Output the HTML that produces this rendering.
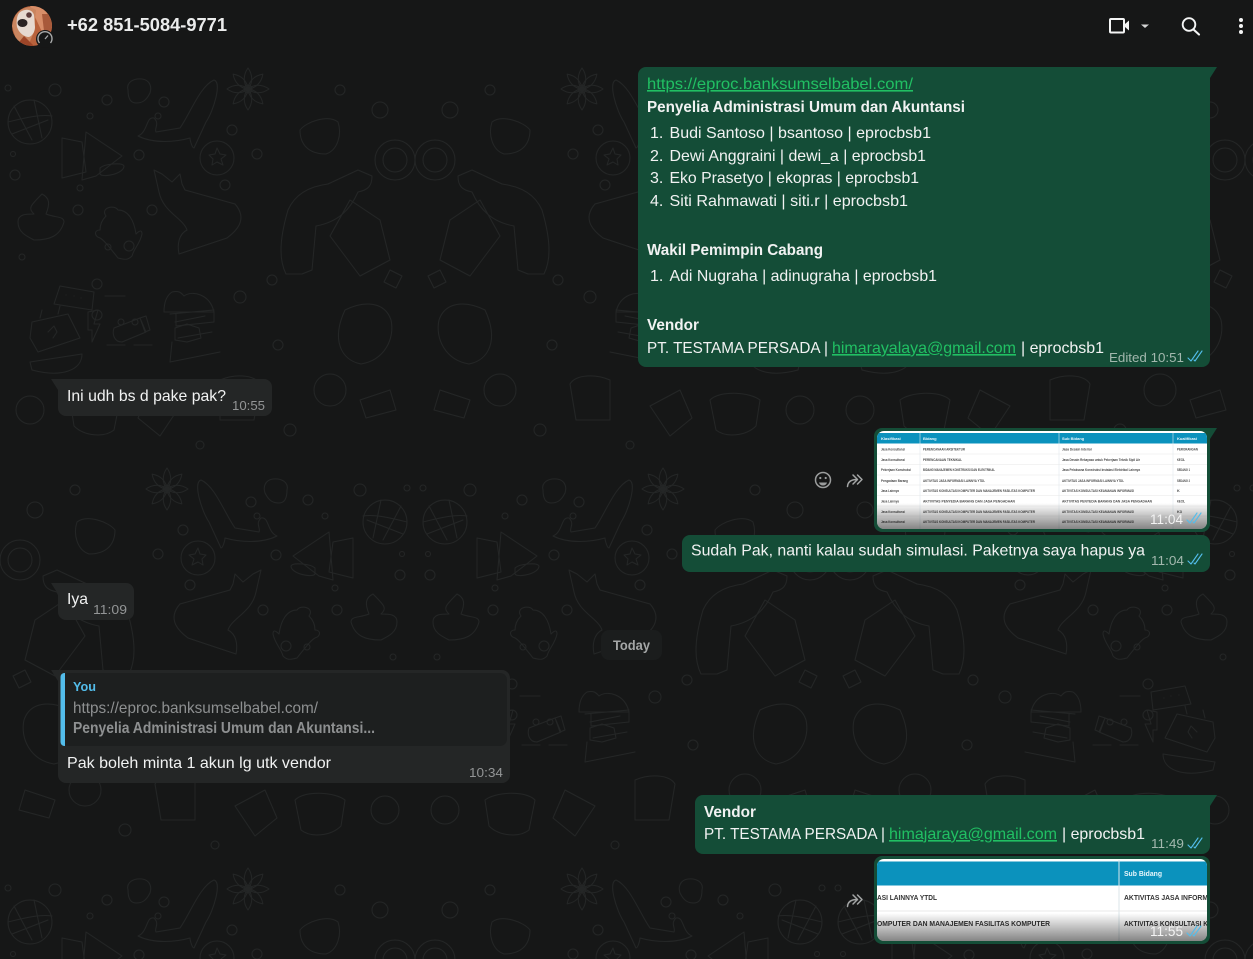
<!DOCTYPE html>
<html lang="en">
<head>
<meta charset="utf-8">
<title>WhatsApp chat</title>
<style>
html,body{margin:0;padding:0;width:1253px;height:959px;overflow:hidden;background:#161717}
svg{display:block;position:absolute;left:0;top:0}
text{font-family:"Liberation Sans",sans-serif;font-size:16px;fill:#f1f2f2}
.b{font-weight:700}
.t{font-size:13px;fill:#a3b8ae}
.tg{font-size:13px;fill:#939596}
.l{fill:#21c063;text-decoration:underline}
.c{fill:none;stroke:#53bdeb;stroke-width:1.1;stroke-linecap:round;stroke-linejoin:round}
.tiny{font-size:3.8px;fill:#4a4a4a;font-weight:700}
.th{font-size:4px;fill:#e8f6fb;font-weight:700}
.d{fill:none;stroke:#242626;stroke-width:1;stroke-linecap:round;stroke-linejoin:round}
</style>
</head>
<body>
<svg width="1253" height="959" viewBox="0 0 1253 959" xmlns="http://www.w3.org/2000/svg">
<defs>
<g id="petal"><path d="M248 29c-5-6-5-14 0-21 5 7 5 15 0 21z"/></g>
<g id="tile" class="d">
    <circle cx="30" cy="62" r="22"/><path d="M8 62c12-3 30-8 44-6M14 46l18 34M34 40l8 38M12 74l36-14"/>
    <path d="M62 78l20 4 4 30-24 6zM86 72l36 24-26 20-14 4zM100 108c4-4 22-6 24-2 0 8-22 12-24 8z"/>
    <path d="M138 76c10-4 8-20 16-18 6 6 0 10 2 14l24-4c10-14 20-42 34-48 8 2 0 30-8 42l-12 26c-2 0-4-8-4-10-14 4-36 6-52-2z"/>
    <use href="#petal"/><use href="#petal" transform="rotate(45 248 29)"/><use href="#petal" transform="rotate(90 248 29)"/><use href="#petal" transform="rotate(135 248 29)"/><use href="#petal" transform="rotate(180 248 29)"/><use href="#petal" transform="rotate(225 248 29)"/><use href="#petal" transform="rotate(270 248 29)"/><use href="#petal" transform="rotate(315 248 29)"/>
    <circle cx="248" cy="29" r="4"/>
    <circle cx="217" cy="98" r="17"/><path d="M217 88l3 6 6 1-5 4 2 6-6-3-5 3 1-6-4-4 6-1z"/>
    <path d="M128 30c-2-8 6-12 14-11 8 1 10 8 8 14-4 8-8 10-14 10-6 0-8-6-8-13z"/>
    <path d="M154 110l8 4 10 8 8-8 2 10 3 6 50 14c14 16 0 28-8 34l-48 16c-2-10 0-20 8-24-4-12-24-18-28-38z"/>
    <path d="M34 154c-6-6-4-8 8-20 8 4 8 10 4 20 10 4 18 2 18 8-4 14-14 18-30 18-8-4-16-8-16-18 0-8 8-8 16-8z"/>
    <path d="M106 156c-6-8 8-12 12-6 10 0 16 10 18 24 4-4 6-4 6 0-2 10-8 14-10 22-4 4-6 4-14 2-8-10-14-18-18-20-6-2-6-8 0-8 0-6 2-10 6-14z"/>
    <path d="M60 226l34 6-2 18-38-6zM66 235h.1M74 236h.1M81 238h.1"/>
    <path d="M32 262l36-8 12 24-42 14-8-14zM40 258l2-8M58 254l2-8"/><path d="M48 272l6-6 3 6-4 6"/>
    <path d="M88 252l10-2-4 14 6 0-8 18v-12h-4z"/>
    <path d="M114 268l26-10 6 14-24 10c-8 0-10-8-8-14zM140 258l6-2 4 14-5 2z"/>
    <path d="M172 232c8-2 10 2 12 4 8-6 26-2 30 16h-50c0-8 2-16 8-20zM170 254l44-4M176 254v12l38-4v-10"/>
    <path d="M32 310c30 8 50 0 50-16l-52 8z"/>
    <path d="M288 150c8-18 24-24 40-26l30-14 14 6c0 10-4 14-14 16-8 18-20 30-42 34l-4 44-10 4-16 0c-6-12-8-30 2-64z"/>
    <path d="M300 70c6-8 28-16 38-8 4 12 0 28-12 32-18 0-26-10-26-24z"/>
    <path d="M175 268l12-4 12 4 2 10-14 4-12-2zM170 302l50-10M172 282l-2 20"/>
    <circle cx="8" cy="28" r="3"/><circle cx="55" cy="30" r="6"/><circle cx="107" cy="40" r="5"/><circle cx="90" cy="56" r="3"/><circle cx="164" cy="42" r="5"/>
    <circle cx="158" cy="56" r="3"/><circle cx="232" cy="70" r="5"/><circle cx="257" cy="94" r="5"/><circle cx="139" cy="95" r="5"/><circle cx="13" cy="94" r="2.500"/>
    <circle cx="15" cy="115" r="5"/><circle cx="78" cy="150" r="5"/><circle cx="152" cy="150" r="5"/><circle cx="225" cy="125" r="5"/><circle cx="80" cy="128" r="3"/>
    <circle cx="129" cy="186" r="5"/><circle cx="97" cy="224" r="5"/><circle cx="108" cy="187" r="3"/><circle cx="22" cy="197" r="3"/><circle cx="240" cy="237" r="6"/>
    <circle cx="97" cy="255" r="5"/><circle cx="121" cy="262" r="3"/><circle cx="135" cy="262" r="3"/><circle cx="272" cy="220" r="5"/><circle cx="278" cy="285" r="5"/>
    <path d="M105 236h20M107 285h18M134 285h18M175 262l30-6M178 278l34-6"/>
    <path d="M350 140l30 20 10 40-30 16-30-40z"/><circle cx="395" cy="100" r="20"/><circle cx="395" cy="100" r="12"/>
    <path d="M345 250c20-10 40-8 46 10 4 18-6 40-30 44-20-4-30-24-16-54z"/><circle cx="340" cy="30" r="5"/><circle cx="380" cy="50" r="8"/>
    <path d="M390 210l12 6-6 12-12-6zM360 340l30-10 6 20-30 8z"/><circle cx="330" cy="330" r="16"/>
    <path d="M70 340c10-8 40-10 50 0l-6 30c-10 8-30 6-40-4zM220 320c14-6 34-6 40 4l-6 36-34 0zM150 330l30 16-20 30-22-18z"/><circle cx="30" cy="350" r="14"/><circle cx="290" cy="370" r="6"/><circle cx="200" cy="385" r="4"/>
</g>
<pattern id="dood" x="0" y="60" width="830" height="800" patternUnits="userSpaceOnUse">
  <use href="#tile"/>
  <use href="#tile" transform="translate(830 0) scale(-1 1)"/>
  <use href="#tile" transform="translate(415 400) scale(-1 1)"/>
  <use href="#tile" transform="translate(415 400)"/>
</pattern>
<linearGradient id="fade" x1="0" y1="0" x2="0" y2="1"><stop offset="0" stop-color="#000" stop-opacity="0"/><stop offset="1" stop-color="#000" stop-opacity=".48"/></linearGradient>
<clipPath id="im1"><rect x="877" y="431" width="330" height="98" rx="7"/></clipPath>
<clipPath id="im2"><rect x="877" y="859" width="330" height="82" rx="7"/></clipPath>
<clipPath id="av"><circle cx="32" cy="26" r="20"/></clipPath>
</defs>

<rect width="1253" height="959" fill="#161717"/>
<rect y="57" width="1253" height="902" fill="url(#dood)"/>

<!-- header -->
<g clip-path="url(#av)">
  <rect x="12" y="6" width="40" height="40" fill="#b8623c"/>
  <path d="M30 6h22v22l-10 4z" fill="#d88e68"/>
  <path d="M12 26c2-12 8-18 18-19l6 3-2 22-6 14H18z" fill="#c9855f"/>
  <path d="M19 13c6-5 13-4 15 2l1 12c0 5-3 9-6 10-5 0-10-4-12-10-1-6 0-11 2-14z" fill="#e6d9d0"/>
  <ellipse cx="22.500" cy="23" rx="5" ry="4" fill="#2b2323"/>
  <circle cx="29" cy="15" r="2.800" fill="#5b3a3a"/>
  <path d="M24 36l10 10H16z" fill="#9c4528"/>
  <path d="M42 14h10v16l-8 1z" fill="#a85a3a"/>
</g>
<circle cx="45" cy="39" r="9" fill="#161717"/>
<path d="M39.500 43a7 7 0 1 1 11 0" fill="none" stroke="#a8aaaa" stroke-width="1.400"/>
<path d="M45 39l3-3.500" stroke="#a8aaaa" stroke-width="1.300"/>
<text x="67" y="31" class="b" style="font-size:18px;fill:#ebecec" textLength="160" lengthAdjust="spacingAndGlyphs">+62 851-5084-9771</text>

<rect x="1110" y="19" width="14" height="13.500" rx="1" fill="none" stroke="#f4f5f5" stroke-width="2"/>
<path d="M1125 24l4-3.500v10l-4-3.500z" fill="#f4f5f5"/>
<path d="M1141 24.500h8l-4 3.500z" fill="#d5d6d6"/>
<circle cx="1189" cy="24.500" r="6.300" fill="none" stroke="#f4f5f5" stroke-width="1.900"/>
<path d="M1193.500 29.500l5.500 5" stroke="#f4f5f5" stroke-width="2.100" stroke-linecap="round"/>
<circle cx="1241" cy="20" r="2" fill="#f4f5f5"/><circle cx="1241" cy="26" r="2" fill="#f4f5f5"/><circle cx="1241" cy="32" r="2" fill="#f4f5f5"/>

<!-- large outgoing -->
<path d="M646 67H1217L1210 78V359a8 8 0 0 1-8 8H646a8 8 0 0 1-8-8V75a8 8 0 0 1 8-8z" fill="#144d37"/>
<text x="647" y="89" class="l" textLength="266" lengthAdjust="spacingAndGlyphs">https://eproc.banksumselbabel.com/</text>
<text x="647" y="112" class="b" textLength="318" lengthAdjust="spacingAndGlyphs">Penyelia Administrasi Umum dan Akuntansi</text>
<text x="650" y="138">1.</text><text x="669.500" y="138" textLength="261.500" lengthAdjust="spacingAndGlyphs">Budi Santoso | bsantoso | eprocbsb1</text>
<text x="650" y="161">2.</text><text x="669.500" y="161" textLength="256.500" lengthAdjust="spacingAndGlyphs">Dewi Anggraini | dewi_a | eprocbsb1</text>
<text x="650" y="183">3.</text><text x="669.500" y="183" textLength="249.500" lengthAdjust="spacingAndGlyphs">Eko Prasetyo | ekopras | eprocbsb1</text>
<text x="650" y="206">4.</text><text x="669.500" y="206" textLength="238.500" lengthAdjust="spacingAndGlyphs">Siti Rahmawati | siti.r | eprocbsb1</text>
<text x="647" y="255" class="b" textLength="176" lengthAdjust="spacingAndGlyphs">Wakil Pemimpin Cabang</text>
<text x="650" y="281">1.</text><text x="669.500" y="281" textLength="267.500" lengthAdjust="spacingAndGlyphs">Adi Nugraha | adinugraha | eprocbsb1</text>
<text x="647" y="330" class="b" textLength="52" lengthAdjust="spacingAndGlyphs">Vendor</text>
<text x="647" y="353" textLength="181" lengthAdjust="spacingAndGlyphs">PT. TESTAMA PERSADA |</text>
<text x="832" y="353" class="l" textLength="184" lengthAdjust="spacingAndGlyphs">himarayalaya@gmail.com</text>
<text x="1021" y="353" textLength="83" lengthAdjust="spacingAndGlyphs">| eprocbsb1</text>
<text x="1109" y="362" class="t" textLength="75" lengthAdjust="spacingAndGlyphs">Edited 10:51</text>
<path class="c" d="M1188 358l3 3 7-10M1194 360l1 1 7-10"/>

<!-- incoming 1 -->
<path d="M51 379H264a8 8 0 0 1 8 8V408a8 8 0 0 1-8 8H66a8 8 0 0 1-8-8V390z" fill="#242626"/>
<text x="67" y="401" textLength="159" lengthAdjust="spacingAndGlyphs">Ini udh bs d pake pak?</text>
<text x="232" y="410" class="tg" textLength="33" lengthAdjust="spacingAndGlyphs">10:55</text>

<!-- image bubble 1 -->
<path d="M882 428H1217L1210 439V524a8 8 0 0 1-8 8H882a8 8 0 0 1-8-8V436a8 8 0 0 1 8-8z" fill="#144d37"/>
<g clip-path="url(#im1)">
  <rect x="877" y="431" width="330" height="98" fill="#fff"/>
  <rect x="877" y="433" width="330" height="10.500" fill="#0b92bd"/>
  <path d="M920 433v96M1059 433v96M1173 433v96" stroke="#dfe9ee" stroke-width=".6"/>
  <path d="M877 454h330M877 464.500h330M877 475h330M877 485h330M877 495.500h330M877 506h330M877 516h330" stroke="#e8e8e8" stroke-width=".6"/>
  <text x="881" y="440" class="th">Klasifikasi</text><text x="923" y="440" class="th">Bidang</text><text x="1062" y="440" class="th">Sub Bidang</text><text x="1177" y="440" class="th">Kualifikasi</text>
  <text class="tiny" x="881" y="450.500" textLength="24" lengthAdjust="spacingAndGlyphs">Jasa Konsultansi</text><text class="tiny" x="923" y="450.500" textLength="42" lengthAdjust="spacingAndGlyphs">PERENCANAAN ARSITEKTUR</text><text class="tiny" x="1062" y="450.500" textLength="30" lengthAdjust="spacingAndGlyphs">Jasa Desain Interior</text><text class="tiny" x="1177" y="450.500" textLength="21" lengthAdjust="spacingAndGlyphs">PERORANGAN</text>
  <text class="tiny" x="881" y="461" textLength="24" lengthAdjust="spacingAndGlyphs">Jasa Konsultansi</text><text class="tiny" x="923" y="461" textLength="39" lengthAdjust="spacingAndGlyphs">PERENCANAAN TEKNIKAL</text><text class="tiny" x="1062" y="461" textLength="78" lengthAdjust="spacingAndGlyphs">Jasa Desain Rekayasa untuk Pekerjaan Teknik Sipil Air</text><text class="tiny" x="1177" y="461" textLength="8" lengthAdjust="spacingAndGlyphs">KECIL</text>
  <text class="tiny" x="881" y="471" textLength="30" lengthAdjust="spacingAndGlyphs">Pekerjaan Konstruksi</text><text class="tiny" x="923" y="471" textLength="72" lengthAdjust="spacingAndGlyphs">BIDANG MANAJEMEN KONSTRUKSI DAN ELEKTRIKAL</text><text class="tiny" x="1062" y="471" textLength="78" lengthAdjust="spacingAndGlyphs">Jasa Pelaksana Konstruksi Instalasi Elektrikal Lainnya</text><text class="tiny" x="1177" y="471" textLength="13" lengthAdjust="spacingAndGlyphs">SEDANG 1</text>
  <text class="tiny" x="881" y="482" textLength="27" lengthAdjust="spacingAndGlyphs">Pengadaan Barang</text><text class="tiny" x="923" y="482" textLength="62" lengthAdjust="spacingAndGlyphs">AKTIVITAS JASA INFORMASI LAINNYA YTDL</text><text class="tiny" x="1062" y="482" textLength="62" lengthAdjust="spacingAndGlyphs">AKTIVITAS JASA INFORMASI LAINNYA YTDL</text><text class="tiny" x="1177" y="482" textLength="13" lengthAdjust="spacingAndGlyphs">SEDANG 2</text>
  <text class="tiny" x="881" y="492" textLength="18" lengthAdjust="spacingAndGlyphs">Jasa Lainnya</text><text class="tiny" x="923" y="492" textLength="112" lengthAdjust="spacingAndGlyphs">AKTIVITAS KONSULTASI KOMPUTER DAN MANAJEMEN FASILITAS KOMPUTER</text><text class="tiny" x="1062" y="492" textLength="72" lengthAdjust="spacingAndGlyphs">AKTIVITAS KONSULTASI KEAMANAN INFORMASI</text><text class="tiny" x="1177" y="492">K</text>
  <text class="tiny" x="881" y="502.500" textLength="18" lengthAdjust="spacingAndGlyphs">Jasa Lainnya</text><text class="tiny" x="923" y="502.500" textLength="92" lengthAdjust="spacingAndGlyphs">AKTIVITAS PENYEDIA BARANG DAN JASA PENGADAAN</text><text class="tiny" x="1062" y="502.500" textLength="90" lengthAdjust="spacingAndGlyphs">AKTIVITAS PENYEDIA BARANG DAN JASA PENGADAAN</text><text class="tiny" x="1177" y="502.500" textLength="8" lengthAdjust="spacingAndGlyphs">KECIL</text>
  <text class="tiny" x="881" y="513" textLength="24" lengthAdjust="spacingAndGlyphs">Jasa Konsultansi</text><text class="tiny" x="923" y="513" textLength="112" lengthAdjust="spacingAndGlyphs">AKTIVITAS KONSULTASI KOMPUTER DAN MANAJEMEN FASILITAS KOMPUTER</text><text class="tiny" x="1062" y="513" textLength="72" lengthAdjust="spacingAndGlyphs">AKTIVITAS KONSULTASI KEAMANAN INFORMASI</text><text class="tiny" x="1177" y="513">K3</text>
  <text class="tiny" x="881" y="523" textLength="24" lengthAdjust="spacingAndGlyphs">Jasa Konsultansi</text><text class="tiny" x="923" y="523" textLength="112" lengthAdjust="spacingAndGlyphs">AKTIVITAS KONSULTASI KOMPUTER DAN MANAJEMEN FASILITAS KOMPUTER</text><text class="tiny" x="1062" y="523" textLength="72" lengthAdjust="spacingAndGlyphs">AKTIVITAS KONSULTASI KEAMANAN INFORMASI</text>
  <rect x="877" y="503" width="330" height="26" fill="url(#fade)"/>
</g>
<text x="1150" y="524" style="font-size:14px;fill:#f3f3f3" textLength="33" lengthAdjust="spacingAndGlyphs">11:04</text>
<path class="c" d="M1187 520l3 3 7-10M1193 522l1 1 7-10"/>

<!-- reactions -->
<circle cx="823" cy="480" r="7.500" fill="none" stroke="#9b9d9d" stroke-width="1.500"/>
<circle cx="820.300" cy="478" r="1.100" fill="#9b9d9d"/><circle cx="825.700" cy="478" r="1.100" fill="#9b9d9d"/>
<path d="M819 482.500h8c-.6 2-2 3-4 3s-3.400-1-4-3z" fill="#9b9d9d"/>
<path d="M847.500 486.500c.3-4 3-7 9.500-7M853 475l4.500 4.500-4.500 4.500M857.500 475l4.500 4.500-4.500 4.500" fill="none" stroke="#a3a5a5" stroke-width="1.500" stroke-linecap="round" stroke-linejoin="round"/>

<!-- bubble Sudah -->
<rect x="682" y="535" width="528" height="37" rx="8" fill="#144d37"/>
<text x="691" y="555.500" textLength="454" lengthAdjust="spacingAndGlyphs">Sudah Pak, nanti kalau sudah simulasi. Paketnya saya hapus ya</text>
<text x="1151" y="565" class="t" textLength="33" lengthAdjust="spacingAndGlyphs">11:04</text>
<path class="c" d="M1188 561l3 3 7-10M1194 563l1 1 7-10"/>

<!-- Iya -->
<path d="M51 583H126a8 8 0 0 1 8 8V612a8 8 0 0 1-8 8H66a8 8 0 0 1-8-8V594z" fill="#242626"/>
<text x="67" y="604" textLength="21" lengthAdjust="spacingAndGlyphs">Iya</text>
<text x="93" y="614" class="tg" textLength="34" lengthAdjust="spacingAndGlyphs">11:09</text>

<!-- Today -->
<rect x="601" y="630" width="61" height="30" rx="8" fill="#1b1d1d"/>
<text x="613" y="650" class="b" style="font-size:14px;fill:#a5a7a7" textLength="37" lengthAdjust="spacingAndGlyphs">Today</text>

<!-- reply -->
<path d="M51 670H502a8 8 0 0 1 8 8V775a8 8 0 0 1-8 8H66a8 8 0 0 1-8-8V681z" fill="#242626"/>
<rect x="61" y="673" width="446" height="73" rx="7" fill="#1d1f1f"/>
<path d="M65 673h-.500a4 4 0 0 0-4 4v65a4 4 0 0 0 4 4h.500z" fill="#53bdeb"/>
<text x="73" y="691" class="b" style="font-size:13px;fill:#53bdeb" textLength="23" lengthAdjust="spacingAndGlyphs">You</text>
<text x="73" y="713" style="fill:#8e9091" textLength="245" lengthAdjust="spacingAndGlyphs">https://eproc.banksumselbabel.com/</text>
<text x="73" y="733" class="b" style="fill:#8e9091" textLength="302" lengthAdjust="spacingAndGlyphs">Penyelia Administrasi Umum dan Akuntansi...</text>
<text x="67" y="768" textLength="264" lengthAdjust="spacingAndGlyphs">Pak boleh minta 1 akun lg utk vendor</text>
<text x="469" y="777" class="tg" textLength="34" lengthAdjust="spacingAndGlyphs">10:34</text>

<!-- vendor -->
<path d="M703 795H1217L1210 806V846a8 8 0 0 1-8 8H703a8 8 0 0 1-8-8V803a8 8 0 0 1 8-8z" fill="#144d37"/>
<text x="704" y="817" class="b" textLength="52" lengthAdjust="spacingAndGlyphs">Vendor</text>
<text x="704" y="839" textLength="181" lengthAdjust="spacingAndGlyphs">PT. TESTAMA PERSADA |</text>
<text x="889" y="839" class="l" textLength="168" lengthAdjust="spacingAndGlyphs">himajaraya@gmail.com</text>
<text x="1062" y="839" textLength="83" lengthAdjust="spacingAndGlyphs">| eprocbsb1</text>
<text x="1151" y="848" class="t" textLength="33" lengthAdjust="spacingAndGlyphs">11:49</text>
<path class="c" d="M1188 845l3 3 7-10M1194 847l1 1 7-10"/>

<!-- image bubble 2 -->
<rect x="874" y="856" width="336" height="88" rx="8" fill="#144d37"/>
<g clip-path="url(#im2)">
  <rect x="877" y="859" width="330" height="82" fill="#fff"/>
  <rect x="877" y="861.500" width="330" height="24" fill="#0b92bd"/>
  <path d="M1119 860v81" stroke="#dbe6ea" stroke-width="1"/>
  <path d="M877 911h330" stroke="#e8e8e8" stroke-width="1"/>
  <text x="1124" y="876" class="b" style="font-size:7.500px;fill:#e8f6fb" textLength="38" lengthAdjust="spacingAndGlyphs">Sub Bidang</text>
  <text x="877" y="900" class="b" style="font-size:7px;fill:#333" textLength="60" lengthAdjust="spacingAndGlyphs">ASI LAINNYA YTDL</text>
  <text x="877" y="926" class="b" style="font-size:7px;fill:#333" textLength="173" lengthAdjust="spacingAndGlyphs">OMPUTER DAN MANAJEMEN FASILITAS KOMPUTER</text>
  <text x="1124" y="900" class="b" style="font-size:7px;fill:#333" textLength="84" lengthAdjust="spacingAndGlyphs">AKTIVITAS JASA INFORM</text>
  <text x="1124" y="926" class="b" style="font-size:7px;fill:#333" textLength="84" lengthAdjust="spacingAndGlyphs">AKTIVITAS KONSULTASI K</text>
  <rect x="877" y="913" width="330" height="28" fill="url(#fade)"/>
</g>
<text x="1150" y="936" style="font-size:14px;fill:#f3f3f3" textLength="33" lengthAdjust="spacingAndGlyphs">11:55</text>
<path class="c" d="M1187 933l3 3 7-10M1193 935l1 1 7-10"/>
<path d="M847.500 906.500c.3-4 3-7 9.500-7M853 895l4.500 4.500-4.500 4.500M857.500 895l4.500 4.500-4.500 4.500" fill="none" stroke="#a3a5a5" stroke-width="1.500" stroke-linecap="round" stroke-linejoin="round"/>
</svg>
</body>
</html>
